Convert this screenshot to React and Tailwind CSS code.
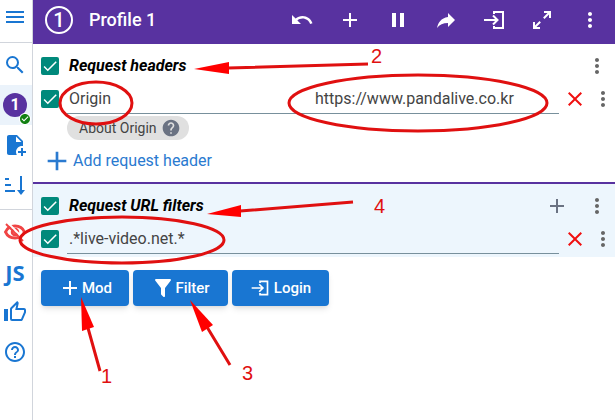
import { useState } from "react";
import { MdMenu, MdSearch, MdUndo, MdAdd, MdPause, MdMoreVert, MdClose, MdHelp, MdHelpOutline, MdCheck, MdCheckCircle } from "react-icons/md";

const paths = {
  share: "M21,12L14,5V9C7,10 4,15 3,20C5.5,16.5 9,14.9 14,14.9V19L21,12Z",
  expand: "M10,21V19H6.41L10.91,14.5L9.5,13.09L5,17.59V14H3V21H10M14.5,10.91L19,6.41V10H21V3H14V5H17.59L13.09,9.5L14.5,10.91Z",
  filePlus: "M14 2H6C4.89 2 4 2.89 4 4V20C4 21.11 4.89 22 6 22H13.81C13.28 21.09 13 20.05 13 19C13 15.69 15.69 13 19 13C19.34 13 19.67 13.03 20 13.08V8L14 2M13 9V3.5L18.5 9H13M23 20H20V23H18V20H15V18H18V15H20V18H23V20Z",
  thumb: "M5,9V21H1V9H5M9,21A2,2 0 0,1 7,19V9C7,8.45 7.22,7.95 7.59,7.59L14.17,1L15.23,2.06C15.5,2.33 15.67,2.7 15.67,3.11L15.64,3.43L14.69,8H21C22.11,8 23,8.9 23,10V12C23,12.26 22.95,12.5 22.86,12.73L19.84,19.78C19.54,20.5 18.83,21 18,21H9M9,19H18.03L21,12V10H12.21L13.34,4.68L9,9.03V19Z",
  filter: "M14,12V19.88C14.04,20.18 13.94,20.5 13.71,20.71C13.32,21.1 12.69,21.1 12.3,20.71L10.29,18.7C10.06,18.47 9.96,18.16 10,17.87V12H9.97L4.21,4.62C3.87,4.19 3.95,3.56 4.38,3.22C4.57,3.08 4.78,3 5,3V3H19V3C19.22,3 19.43,3.08 19.62,3.22C20.05,3.56 20.13,4.19 19.79,4.62L14.03,12H14Z",
};

function Icon({ name, className }) {
  return (
    <svg viewBox="0 0 24 24" className={className} fill="currentColor" aria-hidden="true">
      <path d={paths[name]} />
    </svg>
  );
}

function LoginIcon({ className }) {
  return (
    <svg viewBox="0 0 24 24" className={className} fill="none" stroke="currentColor" strokeWidth="2" aria-hidden="true">
      <path d="M12 6V4h9v16h-9v-2" />
      <path d="M2 12h13M11 7.5l4.5 4.5-4.5 4.5" />
    </svg>
  );
}

function SortIcon({ className }) {
  return (
    <svg viewBox="0 0 24 24" className={className} fill="none" stroke="currentColor" strokeWidth="2" aria-hidden="true">
      <path d="M2 6h4M2 12h6M2 18h10M18 3v15" />
      <path d="M14 17h8l-4 5z" fill="currentColor" stroke="none" />
    </svg>
  );
}

function EyeOffIcon({ className }) {
  return (
    <svg viewBox="0 0 24 24" className={className} fill="none" stroke="currentColor" strokeWidth="3" aria-hidden="true">
      <path d="M2.5 12C6 4 18 4 21.5 12C18 20 6 20 2.5 12z" />
      <circle cx="12" cy="12" r="3" strokeWidth="2.5" />
      <path d="M5 3l17 17" stroke="white" strokeWidth="2" />
      <path d="M3 4l17 17" strokeWidth="2" />
    </svg>
  );
}

function Checkbox({ label }) {
  const [checked, setChecked] = useState(true);
  return (
    <label className="grid size-[18px] shrink-0 place-items-center">
      <input
        type="checkbox"
        aria-label={label}
        checked={checked}
        onChange={(e) => setChecked(e.target.checked)}
        className="col-start-1 row-start-1 size-[18px] appearance-none rounded-xs border-2 border-[#00897b] checked:bg-[#00897b]"
      />
      {checked && <MdCheck className="pointer-events-none col-start-1 row-start-1 size-[18px] text-white" />}
    </label>
  );
}

function SectionTitle({ title, canAdd }) {
  return (
    <div className="flex h-8 items-center pr-1.5">
      <Checkbox label={title} />
      <h2 className="ml-2.5 flex-1 text-base font-bold italic text-black">{title}</h2>
      {canAdd && (
        <button aria-label="Add filter" className="mr-4 text-gray-500">
          <MdAdd className="size-6" />
        </button>
      )}
      <button aria-label={`${title} menu`} className="text-[#666]">
        <MdMoreVert className="size-6" />
      </button>
    </div>
  );
}

function ModRow({ name, value, label }) {
  return (
    <div className="flex h-8 items-center">
      <Checkbox label={`Enable ${label}`} />
      <div className="mr-1 ml-2 flex h-[30px] min-w-0 flex-1 border-b border-[#78909c]">
        <input aria-label={label} defaultValue={name} className="min-w-0 flex-1 bg-transparent pl-0.5 text-base text-[#444] outline-none" />
        {value && (
          <input aria-label="Value" defaultValue={value} className="min-w-0 flex-1 bg-transparent pl-0.5 text-base text-[#444] outline-none" />
        )}
      </div>
      <button aria-label={`Remove ${label}`} className="text-[#f01010]">
        <MdClose className="size-6" />
      </button>
      <button aria-label={`${label} menu`} className="ml-1 text-[#666]">
        <MdMoreVert className="size-6" />
      </button>
    </div>
  );
}

function SideButton({ label, className = "", children }) {
  return (
    <button aria-label={label} className={`flex h-10 w-full items-center justify-center pr-0.5 ${className}`}>
      {children}
    </button>
  );
}

function Sidebar() {
  return (
    <nav className="flex w-[33px] shrink-0 flex-col border-r border-gray-300 text-[#1976d2]">
      <div className="border-b border-gray-300 pb-0.5">
        <SideButton label="Menu" className="pb-1.5">
          <MdMenu className="size-6" />
        </SideButton>
      </div>
      <div className="border-b border-gray-300 pt-0.5 pb-1">
        <SideButton label="Search">
          <MdSearch className="size-6" />
        </SideButton>
        <SideButton label="Profile 1" className="bg-[#ebf3fb]">
          <span className="relative flex size-6 items-center justify-center rounded-full bg-[#5832a0] text-base font-bold text-white">
            1
            <MdCheckCircle className="absolute -right-1 -bottom-2 size-3 rounded-full bg-white text-[#128012]" />
          </span>
        </SideButton>
        <SideButton label="New profile">
          <Icon name="filePlus" className="size-6" />
        </SideButton>
        <SideButton label="Sort profiles">
          <SortIcon className="size-6" />
        </SideButton>
      </div>
      <div className="pt-0.5">
        <SideButton label="Hide" className="text-[#f04444]">
          <EyeOffIcon className="size-6" />
        </SideButton>
        <SideButton label="JavaScript">
          <span className="font-['Open_Sans',sans-serif] text-[22px] font-bold">JS</span>
        </SideButton>
        <SideButton label="Like">
          <Icon name="thumb" className="size-6" />
        </SideButton>
        <SideButton label="Help">
          <MdHelpOutline className="size-6" />
        </SideButton>
      </div>
    </nav>
  );
}

function Header() {
  const actions = [
    { label: "Undo", icon: <MdUndo className="size-6" /> },
    { label: "Add", icon: <MdAdd className="size-6" /> },
    { label: "Pause", icon: <MdPause className="size-6" /> },
    { label: "Share", icon: <Icon name="share" className="size-6" /> },
    { label: "Login", icon: <LoginIcon className="size-6" /> },
    { label: "Expand", icon: <Icon name="expand" className="size-6" /> },
    { label: "More", icon: <MdMoreVert className="size-6" /> },
  ];
  return (
    <header className="flex h-11 items-center bg-[#5832a0] pr-px pb-1 pl-3 text-white">
      <span className="flex size-7 items-center justify-center rounded-full border-2 border-white text-xl font-medium">1</span>
      <h1 className="ml-4 flex-1 text-lg font-medium">Profile 1</h1>
      {actions.map((a) => (
        <button key={a.label} aria-label={a.label} className="flex w-12 justify-center">
          {a.icon}
        </button>
      ))}
    </header>
  );
}

// Red ellipses, arrows and step numbers drawn over the page
function Annotations() {
  return (
    <svg width="615" height="420" className="pointer-events-none absolute top-0 left-0" fill="none" stroke="#e01010" strokeWidth="3">
      <ellipse cx="96" cy="103" rx="36" ry="21" />
      <ellipse cx="418" cy="103" rx="129" ry="28" />
      <ellipse cx="122" cy="240" rx="102" ry="23" />
      <path d="M368 64L228 68M353 202L240 211M100 371L88 328M230 365L207 327" />
      <g fill="#ff0000" stroke="none">
        <path d="M194 69L229 62V74z" />
        <path d="M207 214L241 205V217z" />
        <path d="M81 297L94 327L82 331z" />
        <path d="M190 300L213 325L202 332z" />
      </g>
      <g fill="#e01010" stroke="none" className="font-['Liberation_Sans',sans-serif] text-xl">
        <text x="371" y="63">2</text>
        <text x="374" y="213">4</text>
        <text x="101" y="383">1</text>
        <text x="242" y="380">3</text>
      </g>
    </svg>
  );
}

export default function App() {
  const buttonClass = "flex h-9 items-center justify-center rounded bg-[#1976d2] text-[15px] font-medium text-white shadow-md";
  return (
    <div className="relative flex min-h-screen bg-white font-[Roboto,sans-serif]">
      <Sidebar />
      <div className="min-w-0 flex-1">
        <Header />
        <main>
          <section className="flex flex-col gap-px border-b-2 border-[#5832a0] pt-1.5 pb-[5px] pl-2">
            <SectionTitle title="Request headers" />
            <ModRow name="Origin" value="https://www.pandalive.co.kr" label="Header" />
            <a href="#about" className="ml-[26px] flex h-6 items-center gap-1 self-start rounded-full bg-[#e0e0e0] px-2 pl-3 text-sm text-[#444]">
              About Origin
              <MdHelp className="size-5 text-gray-500" />
            </a>
            <button className="mt-1 flex h-8 items-center self-start text-base text-[#2a7ad0]">
              <MdAdd className="size-8" />
              Add request header
            </button>
          </section>
          <section className="flex flex-col gap-px bg-[#edf6fd] pt-1.5 pb-0.5 pl-2">
            <SectionTitle title="Request URL filters" canAdd />
            <ModRow name=".*live-video.net.*" label="Filter" />
          </section>
          <div className="flex gap-1 px-2 pt-[13px]">
            <button className={`${buttonClass} w-22`}>
              <MdAdd className="size-6" />
              Mod
            </button>
            <button className={`${buttonClass} w-[95px]`}>
              <Icon name="filter" className="size-6" />
              Filter
            </button>
            <button className={`${buttonClass} w-[97px] gap-1`}>
              <LoginIcon className="size-5" />
              Login
            </button>
          </div>
        </main>
      </div>
      <Annotations />
    </div>
  );
}
